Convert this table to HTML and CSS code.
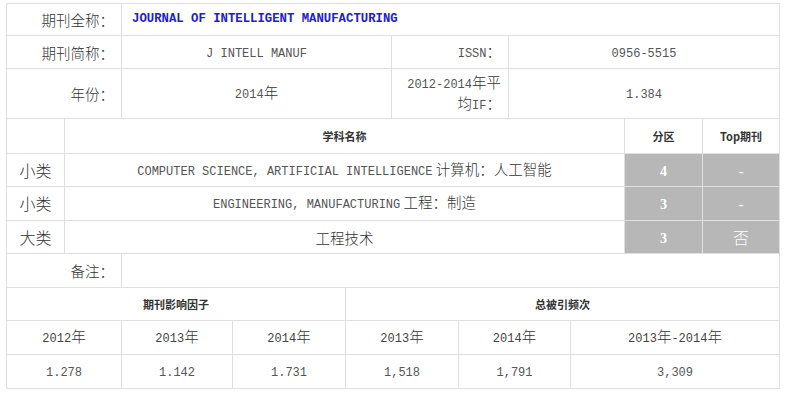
FILE: index.html
```html
<!DOCTYPE html>
<html lang="zh-CN">
<head>
<meta charset="utf-8">
<title>期刊信息</title>
<link rel="stylesheet" href="styles.css">
</head>
<body>
<table class="info">
  <colgroup>
    <col class="c1"><col class="c2"><col class="c3"><col class="c4"><col class="c5"><col class="c6"><col class="c7"><col class="c8"><col class="c9"><col class="c10"><col class="c11">
  </colgroup>
  <tr class="h32">
    <td colspan="2" class="lbl">期刊全称：</td>
    <td colspan="9" class="title">JOURNAL OF INTELLIGENT MANUFACTURING</td>
  </tr>
  <tr class="h33">
    <td colspan="2" class="lbl">期刊简称：</td>
    <td colspan="3"><span class="en">J INTELL MANUF</span></td>
    <td colspan="2" class="lbl"><span class="en">ISSN</span>：</td>
    <td colspan="4"><span class="en">0956-5515</span></td>
  </tr>
  <tr class="h50">
    <td colspan="2" class="lbl">年份：</td>
    <td colspan="3"><span class="en">2014</span>年</td>
    <td colspan="2" class="lbl"><span class="en">2012-2014</span>年平<br>均<span class="en">IF</span>：</td>
    <td colspan="4"><span class="en">1.384</span></td>
  </tr>
  <tr class="h35">
    <td class="side"></td>
    <td colspan="8" class="hd">学科名称</td>
    <td class="hd">分区</td>
    <td class="hd">Top期刊</td>
  </tr>
  <tr class="h33">
    <td class="side">小类</td>
    <td colspan="8"><span class="en">COMPUTER SCIENCE, ARTIFICIAL INTELLIGENCE</span> 计算机：人工智能</td>
    <td class="zone"><span class="num">4</span></td>
    <td class="zone"><span class="num">-</span></td>
  </tr>
  <tr class="h34">
    <td class="side">小类</td>
    <td colspan="8"><span class="en">ENGINEERING, MANUFACTURING</span> 工程：制造</td>
    <td class="zone"><span class="num">3</span></td>
    <td class="zone"><span class="num">-</span></td>
  </tr>
  <tr class="h33">
    <td class="side">大类</td>
    <td colspan="8">工程技术</td>
    <td class="zone"><span class="num">3</span></td>
    <td class="zone big">否</td>
  </tr>
  <tr class="h34">
    <td colspan="2" class="lbl">备注：</td>
    <td colspan="9"></td>
  </tr>
  <tr class="h33">
    <td colspan="4" class="hd">期刊影响因子</td>
    <td colspan="7" class="hd">总被引频次</td>
  </tr>
  <tr class="h34">
    <td colspan="2"><span class="en yr">2012</span>年</td>
    <td><span class="en yr">2013</span>年</td>
    <td><span class="en yr">2014</span>年</td>
    <td colspan="2"><span class="en yr">2013</span>年</td>
    <td colspan="2"><span class="en yr">2014</span>年</td>
    <td colspan="3"><span class="en yr">2013</span>年<span class="en yr">-2014</span>年</td>
  </tr>
  <tr class="h34">
    <td colspan="2"><span class="en">1.278</span></td>
    <td><span class="en">1.142</span></td>
    <td><span class="en">1.731</span></td>
    <td colspan="2"><span class="en">1,518</span></td>
    <td colspan="2"><span class="en">1,791</span></td>
    <td colspan="3"><span class="en">3,309</span></td>
  </tr>
</table>
</body>
</html>
```

FILE: styles.css
```css
body {
  margin: 0;
  background: #ffffff;
}

.info {
  margin: 3px 0 0 6px;
  width: 773px;
  border-collapse: collapse;
  table-layout: fixed;
  font-family: "Noto Sans CJK SC", sans-serif;
  font-size: 14.5px;
  font-weight: 300;
  color: #333333;
}

.c1 { width: 58px; }
.c2 { width: 57px; }
.c3 { width: 111px; }
.c4 { width: 113px; }
.c5 { width: 46px; }
.c6 { width: 67px; }
.c7 { width: 50px; }
.c8 { width: 62px; }
.c9 { width: 54px; }
.c10 { width: 78px; }
.c11 { width: 77px; }

.h32 { height: 32px; }
.h33 { height: 33px; }
.h34 { height: 34px; }
.h35 { height: 35px; }
.h50 { height: 50px; }

.info td {
  border: 1px solid #dfdfdf;
  padding: 0 8px;
  text-align: center;
  vertical-align: middle;
  line-height: 17px;
  white-space: nowrap;
}

.info td.lbl {
  text-align: right;
  padding-right: 7px;
}

.info td.title {
  text-align: left;
  padding-left: 10px;
  font-family: "Liberation Mono", monospace;
  font-weight: bold;
  font-size: 12.3px;
  color: #2020cc;
}

.en {
  font-family: "Liberation Mono", monospace;
  font-weight: normal;
  font-size: 12px;
  color: #555555;
}

.yr {
  color: #444444;
}

.info td.side {
  font-size: 16px;
  padding: 0;
}

.info td.hd {
  font-size: 11px;
  font-weight: bold;
  color: #333333;
}

.info td.zone {
  background: #b7b7b7;
  color: #ffffff;
}

.num {
  font-family: "Liberation Serif", serif;
  font-weight: bold;
  font-size: 14px;
}

.info td.big {
  font-size: 16px;
}
```
